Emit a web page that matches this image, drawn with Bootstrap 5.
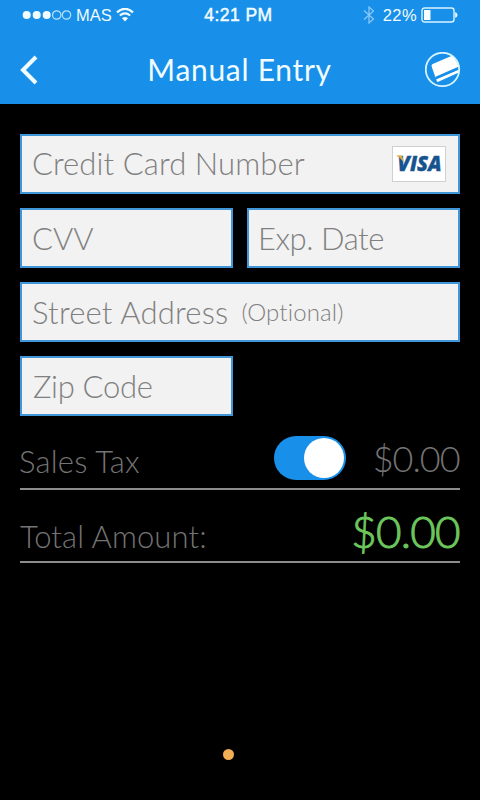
<!DOCTYPE html>
<html lang="en">
<head>
  <meta charset="UTF-8">
  <title>Manual Entry</title>
  <meta name="viewport" content="width=device-width, initial-scale=1">
  <!-- Bootstrap CSS -->
  <link href="https://cdn.jsdelivr.net/npm/bootstrap@5.3.2/dist/css/bootstrap.min.css" rel="stylesheet">
  <style>
    body { background-color: #000; font-family: Lato, sans-serif; min-height: 800px; }
    svg { display: block; flex: none; }
    .app-header { background-color: #188fe8; color: #f0fcff; height: 104px; }
    .status-bar { height: 30px; padding: 0 22px 0 22px; font: 16.5px/30px "Liberation Sans", sans-serif; }
    .status-side { width: 160px; }
    .status-time { font-size: 17.5px; letter-spacing: .45px; margin-right: 3px; -webkit-text-stroke: .5px; }
    .battery-text { margin: 0 4px 0 8px; letter-spacing: .4px; }
    .title-bar { height: 80px; padding: 0 19px 0 20px; }
    .page-title { font-size: 30px; font-weight: 400; letter-spacing: .7px; line-height: 78px; padding: 0 1px 2px 0; }
    .entry-form { padding: 30px 20px 0; }
    .field-grid { --bs-gutter-x: 14px; --bs-gutter-y: 14px; }
    .field { height: 60px; padding: 0 12px 0 10px; border: 2px solid #3f97d8; border-radius: 0; background-color: #f2f2f2; color: #808080; font-size: 31px; font-weight: 300; line-height: 56px; white-space: nowrap; }
    .field-hint { font-size: 24px; margin-left: 13px; letter-spacing: .15px; }
    .lbl-card { letter-spacing: .1px; line-height: 54px; padding-bottom: 2px; }
    .lbl-exp { letter-spacing: -.45px; margin-left: -1px; }
    .lbl-street { letter-spacing: .2px; }
    .lbl-zip { letter-spacing: -.3px; margin-left: 1px; }
    .visa-card { width: 54px; height: 36px; border: 1px solid #d0d0d0; background-color: #fff; }
    .total-row { border-bottom: 2px solid #8c8c8c; color: #747474; font-size: 31px; font-weight: 300; line-height: 54px; white-space: nowrap; }
    .tax-row { height: 74px; }
    .sum-row { height: 73px; }
    .lbl-tax { padding-top: 18px; margin-left: -1px; letter-spacing: .2px; }
    .lbl-sum { padding-top: 21px; letter-spacing: .1px; }
    .tax-switch { width: 72px; height: 44px; padding: 2px; border-radius: 22px; background-color: #188fe8; margin: 11px 27px 0 0; }
    .tax-knob { width: 40px; height: 40px; background-color: #fff; }
    .tax-value { font-size: 36px; letter-spacing: -1px; padding-top: 12px; margin-right: .4px; }
    .sum-value { color: #6cc65c; font-size: 44px; font-weight: 300; letter-spacing: -.8px; padding-top: 11px; margin-right: .4px; -webkit-text-stroke: 1px; }
    .page-dot { width: 11px; height: 11px; background-color: #f3ad55; margin: 186px 0 0 202.5px; }
  </style>
</head>
<body>
<header class="app-header">
  <!-- Status bar -->
  <div class="status-bar d-flex justify-content-between align-items-center">
    <div class="status-side d-flex align-items-center">
      <svg width="50" height="10" viewBox="0 0 50 10" fill="#f0fcff" stroke="none">
        <circle cx="4.7" cy="5" r="4"/><circle cx="14.7" cy="5" r="4"/><circle cx="24.7" cy="5" r="4"/>
        <g fill="none" stroke="#b9e2fb" stroke-width="1.2"><circle cx="34.7" cy="5" r="4.2"/><circle cx="44.5" cy="5" r="4.2"/></g>
      </svg>
      <span class="carrier ms-1">MAS</span>
      <svg class="ms-1" width="18" height="14" viewBox="0 0 18 14" fill="none" stroke="#f0fcff" stroke-width="2.2">
        <path d="M1 4.3Q9 -2.6 17 4.3M3.8 7.5Q9 3.2 14.2 7.5"/>
        <path d="M6 10.2Q9 7.7 12 10.2L9 13.4Z" fill="#f0fcff" stroke="none"/>
      </svg>
    </div>
    <span class="status-time">4:21 PM</span>
    <div class="status-side d-flex align-items-center justify-content-end">
      <svg width="12" height="18" viewBox="0 0 12 18" fill="none" stroke="#8ccaf6" stroke-width="1.2">
        <path d="M1 4.5L10.5 13L6 17V1L10.5 5L1 13.5"/>
      </svg>
      <span class="battery-text">22%</span>
      <svg width="37" height="16" viewBox="0 0 37 16">
        <rect x="1" y="1" width="32" height="14" rx="2.5" fill="none" stroke="#d9f3ff" stroke-width="1.4"/>
        <rect x="3" y="3" width="6.5" height="10" fill="#f6fdff"/>
        <path d="M34.2 5Q36.5 6 36.5 8T34.2 11Z" fill="#f0fcff"/>
      </svg>
    </div>
  </div>
  <!-- Title bar -->
  <div class="title-bar d-flex justify-content-between align-items-center">
    <svg width="35" height="30" viewBox="0 0 35 30" fill="none" stroke="#f0fcff" stroke-width="4">
      <path d="M16 2L3 15L16 28"/>
    </svg>
    <h1 class="page-title m-0">Manual Entry</h1>
    <svg width="36" height="36" viewBox="0 0 36 36">
      <clipPath id="ring"><circle cx="17.5" cy="17.5" r="17"/></clipPath>
      <g clip-path="url(#ring)" fill="#fff">
        <path d="M6.7 14.7Q6 13 7.7 12.1L27.5 3.5L35 15L10.5 25.6Z"/>
        <path d="M11.2 27.3L35 17V20L12.8 29.9Q11.8 30 11.2 27.3Z"/>
        <path d="M10.5 24.8L35 14.1V17L11.2 27.2Z" fill="#188fe8"/>
      </g>
      <circle cx="17.5" cy="17.5" r="16.7" fill="none" stroke="#d5f4ff" stroke-width="1.8"/>
    </svg>
  </div>
</header>

<main class="entry-form">
  <!-- Card fields -->
  <div class="row field-grid">
    <div class="col-12">
      <div class="field d-flex align-items-center justify-content-between">
        <span class="lbl-card">Credit Card Number</span>
        <div class="visa-card d-flex align-items-center justify-content-center">
          <svg width="52" height="30" viewBox="0 0 52 30">
            <text x="4.5" y="22" font-family="Open Sans, sans-serif" font-size="21.5" font-weight="800" font-style="italic" fill="#17548f" stroke="#17548f" stroke-width=".4" textLength="44" lengthAdjust="spacingAndGlyphs">VISA</text>
            <path d="M3 6.5H7.5Q9.4 6.5 9.7 8.5L10.5 13Q7.5 8.5 3 6.5Z" fill="#e3a63d"/>
          </svg>
        </div>
      </div>
    </div>
    <div class="col-6">
      <div class="field"><span class="lbl-cvv">CVV</span></div>
    </div>
    <div class="col-6">
      <div class="field"><span class="lbl-exp">Exp. Date</span></div>
    </div>
    <div class="col-12">
      <div class="field d-flex">
        <span class="lbl-street">Street Address</span>
        <span class="field-hint">(Optional)</span>
      </div>
    </div>
    <div class="col-6">
      <div class="field"><span class="lbl-zip">Zip Code</span></div>
    </div>
  </div>

  <!-- Totals -->
  <div class="total-row tax-row d-flex align-items-center">
    <span class="lbl-tax me-auto">Sales Tax</span>
    <div class="tax-switch d-flex justify-content-end" role="switch" aria-checked="true">
      <span class="tax-knob rounded-circle"></span>
    </div>
    <span class="tax-value">$0.00</span>
  </div>
  <div class="total-row sum-row d-flex align-items-center justify-content-between">
    <span class="lbl-sum">Total Amount:</span>
    <span class="sum-value">$0.00</span>
  </div>
  <div class="page-dot rounded-circle"></div>
</main>

<!-- Bootstrap JS -->
<script src="https://cdn.jsdelivr.net/npm/bootstrap@5.3.2/dist/js/bootstrap.bundle.min.js"></script>
</body>
</html>
